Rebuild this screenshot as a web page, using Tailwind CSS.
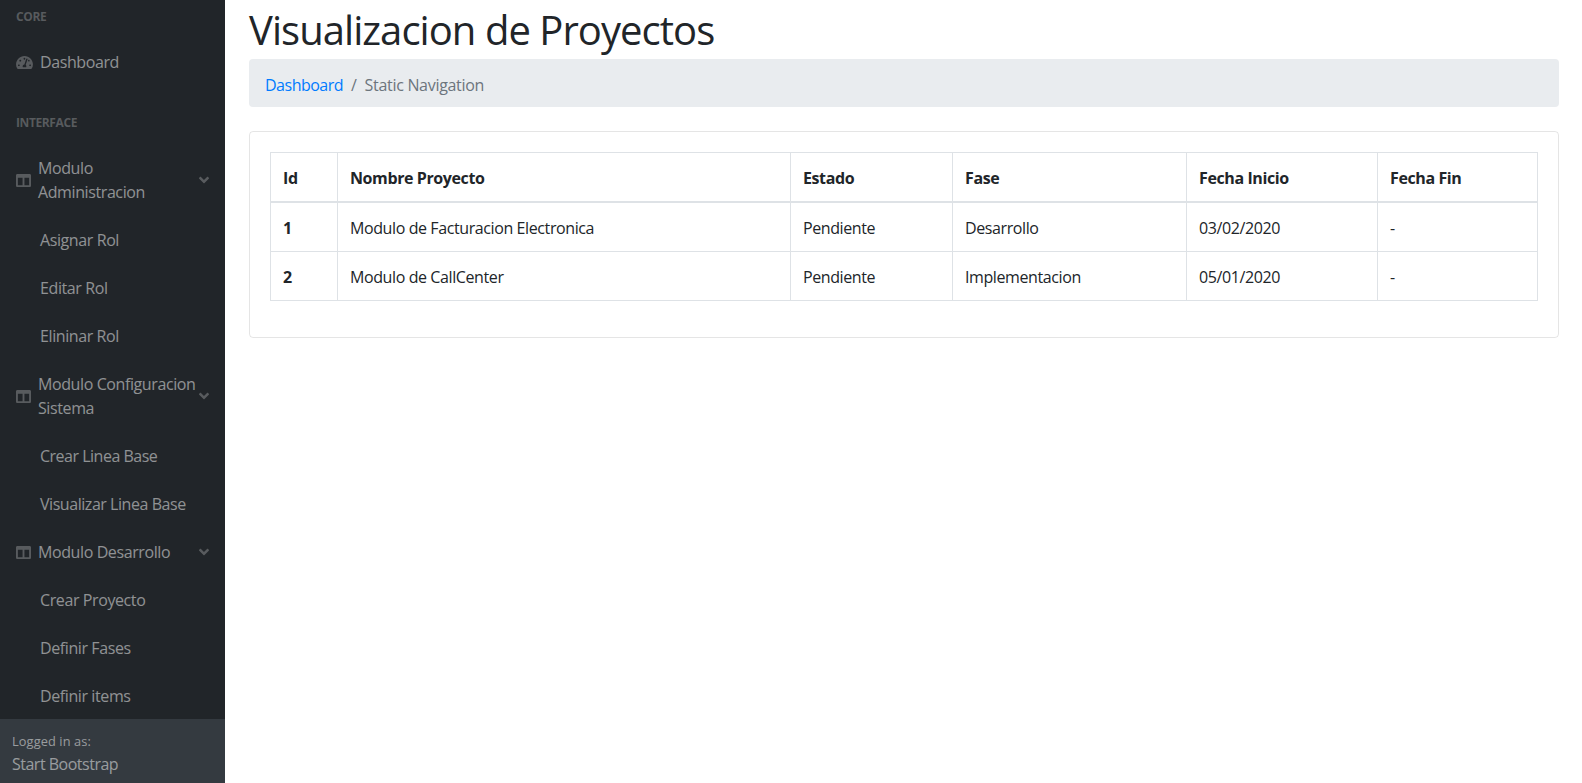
<!DOCTYPE html>
<html lang="es">
<head>
    <meta charset="UTF-8">
    <title>Visualizacion de Proyectos</title>
    <script src="https://cdn.jsdelivr.net/npm/@tailwindcss/browser@4"></script>
</head>
<body class="bg-white h-screen overflow-hidden flex font-['Open_Sans',sans-serif] text-[#212529] text-[16px] leading-[24px] tracking-[-0.4px]">
    <!-- sidebar -->
    <aside class="w-[225px] shrink-0 h-full flex flex-col bg-[#212529] text-white/50">
        <nav class="flex-1 min-h-0 overflow-hidden pt-[8px]">
            <div class="px-4 pb-3 text-[12px] leading-[18px] font-bold text-white/25">CORE</div>
            <a class="flex items-center h-12 px-4">
                <svg class="w-[17px] h-[15px] mr-[7px] fill-white/25" viewBox="0 0 576 512"><path d="M288 32C128.94 32 0 160.94 0 320c0 52.8 14.25 102.26 39.06 144.8 5.61 9.62 16.3 15.2 27.44 15.2h443c11.14 0 21.83-5.58 27.44-15.2C561.75 422.26 576 372.8 576 320c0-159.06-128.94-288-288-288zm0 64c14.71 0 26.58 10.13 30.32 23.65-1.11 2.26-2.64 4.23-3.45 6.67l-9.22 27.67c-5.13 3.49-10.97 6.01-17.64 6.01-17.67 0-32-14.33-32-32S270.33 96 288 96zM96 384c-17.67 0-32-14.33-32-32s14.33-32 32-32 32 14.33 32 32-14.33 32-32 32zm48-160c-17.67 0-32-14.33-32-32s14.33-32 32-32 32 14.33 32 32-14.33 32-32 32zm246.77-72.41l-61.33 184C343.13 347.33 352 364.54 352 384c0 11.72-3.38 22.55-8.88 32H232.88c-5.5-9.45-8.88-20.28-8.88-32 0-33.94 26.5-61.43 59.9-63.59l61.34-184.01c4.17-12.56 17.73-19.45 30.36-15.17 12.57 4.19 19.35 17.77 15.17 30.36zm14.66 57.2l15.52-46.55c3.47-1.29 7.13-2.23 11.05-2.23 17.67 0 32 14.33 32 32s-14.33 32-32 32c-11.38-.01-20.89-6.28-26.57-15.22zM480 384c-17.67 0-32-14.33-32-32s14.33-32 32-32 32 14.33 32 32-14.33 32-32 32z"/></svg>
                <span>Dashboard</span>
            </a>
            <div class="px-4 pt-7 pb-3 text-[12px] leading-[18px] font-bold text-white/25">INTERFACE</div>

            <a class="flex items-center py-3 pl-4 pr-[16px]">
                <svg class="w-[15px] h-[15px] mr-[7px] shrink-0 fill-white/25" viewBox="0 0 512 512"><path d="M464 32H48C21.49 32 0 53.49 0 80v352c0 26.51 21.49 48 48 48h416c26.51 0 48-21.49 48-48V80c0-26.51-21.49-48-48-48zM224 416H64V160h160v256zm224 0H288V160h160v256z"/></svg>
                <span class="flex-1">Modulo Administracion</span>
                <svg class="w-[10px] h-[16px] shrink-0 fill-white/25" viewBox="0 0 320 512"><path d="M143 352.3L7 216.3c-9.4-9.4-9.4-24.6 0-33.9l22.6-22.6c9.4-9.4 24.6-9.4 33.9 0l96.4 96.4 96.4-96.4c9.4-9.4 24.6-9.4 33.9 0l22.6 22.6c9.4 9.4 9.4 24.6 0 33.9l-136 136c-9.2 9.4-24.4 9.4-33.8 0z"/></svg>
            </a>
            <a class="flex items-center h-12 pl-10">Asignar Rol</a>
            <a class="flex items-center h-12 pl-10">Editar Rol</a>
            <a class="flex items-center h-12 pl-10">Elininar Rol</a>

            <a class="flex items-center py-3 pl-4 pr-[16px]">
                <svg class="w-[15px] h-[15px] mr-[7px] shrink-0 fill-white/25" viewBox="0 0 512 512"><path d="M464 32H48C21.49 32 0 53.49 0 80v352c0 26.51 21.49 48 48 48h416c26.51 0 48-21.49 48-48V80c0-26.51-21.49-48-48-48zM224 416H64V160h160v256zm224 0H288V160h160v256z"/></svg>
                <span class="flex-1 whitespace-pre-line tracking-[-0.4px]">Modulo Configuracion
Sistema</span>
                <svg class="w-[10px] h-[16px] shrink-0 fill-white/25" viewBox="0 0 320 512"><path d="M143 352.3L7 216.3c-9.4-9.4-9.4-24.6 0-33.9l22.6-22.6c9.4-9.4 24.6-9.4 33.9 0l96.4 96.4 96.4-96.4c9.4-9.4 24.6-9.4 33.9 0l22.6 22.6c9.4 9.4 9.4 24.6 0 33.9l-136 136c-9.2 9.4-24.4 9.4-33.8 0z"/></svg>
            </a>
            <a class="flex items-center h-12 pl-10 tracking-[-0.5px]">Crear Linea Base</a>
            <a class="flex items-center h-12 pl-10 tracking-[-0.45px]">Visualizar Linea Base</a>

            <a class="flex items-center h-12 pl-4 pr-[16px]">
                <svg class="w-[15px] h-[15px] mr-[7px] shrink-0 fill-white/25" viewBox="0 0 512 512"><path d="M464 32H48C21.49 32 0 53.49 0 80v352c0 26.51 21.49 48 48 48h416c26.51 0 48-21.49 48-48V80c0-26.51-21.49-48-48-48zM224 416H64V160h160v256zm224 0H288V160h160v256z"/></svg>
                <span class="flex-1">Modulo Desarrollo</span>
                <svg class="w-[10px] h-[16px] shrink-0 fill-white/25" viewBox="0 0 320 512"><path d="M143 352.3L7 216.3c-9.4-9.4-9.4-24.6 0-33.9l22.6-22.6c9.4-9.4 24.6-9.4 33.9 0l96.4 96.4 96.4-96.4c9.4-9.4 24.6-9.4 33.9 0l22.6 22.6c9.4 9.4 9.4 24.6 0 33.9l-136 136c-9.2 9.4-24.4 9.4-33.8 0z"/></svg>
            </a>
            <a class="flex items-center h-12 pl-10">Crear Proyecto</a>
            <a class="flex items-center h-12 pl-10">Definir Fases</a>
            <a class="flex items-center h-12 pl-10">Definir items</a>
        </nav>
        <div class="h-[64px] shrink-0 bg-[#343a40] px-3 pt-[13px]">
            <div class="text-[12.8px] leading-[19px] tracking-[0.1px]">Logged in as:</div>
            <div class="mt-[1px] tracking-[-0.5px]">Start Bootstrap</div>
        </div>
    </aside>

    <!-- main -->
    <main class="flex-1 min-w-0 pl-6 pr-[23px]">
        <h1 class="text-[40px] leading-[48px] tracking-[-0.95px] pt-[6px] mb-[5px]">Visualizacion de Proyectos</h1>
        <ol class="flex items-center h-12 px-4 pt-[3px] mb-6 bg-[#e9ecef] rounded">
            <li class="text-[#007bff] tracking-[-0.5px]">Dashboard</li>
            <li class="text-[#6c757d] px-2">/</li>
            <li class="text-[#6c757d] tracking-[-0.3px]">Static Navigation</li>
        </ol>
        <div class="border border-black/10 rounded p-5">
            <table class="w-full table-fixed border-collapse mb-4">
                <colgroup>
                    <col class="w-[67px]"><col class="w-[453px]"><col class="w-[162px]"><col class="w-[234px]"><col class="w-[191px]"><col>
                </colgroup>
                <thead>
                    <tr class="h-[49px]">
                        <th class="border border-[#dee2e6] border-b-2 px-3 pt-[2px] text-left font-bold">Id</th>
                        <th class="border border-[#dee2e6] border-b-2 px-3 pt-[2px] text-left font-bold">Nombre Proyecto</th>
                        <th class="border border-[#dee2e6] border-b-2 px-3 pt-[2px] text-left font-bold">Estado</th>
                        <th class="border border-[#dee2e6] border-b-2 px-3 pt-[2px] text-left font-bold">Fase</th>
                        <th class="border border-[#dee2e6] border-b-2 px-3 pt-[2px] text-left font-bold">Fecha Inicio</th>
                        <th class="border border-[#dee2e6] border-b-2 px-3 pt-[2px] text-left font-bold">Fecha Fin</th>
                    </tr>
                </thead>
                <tbody>
                    <tr class="h-[50px]">
                        <td class="border border-[#dee2e6] px-3 pt-[2px] font-bold">1</td>
                        <td class="border border-[#dee2e6] px-3 pt-[2px]">Modulo de Facturacion Electronica</td>
                        <td class="border border-[#dee2e6] px-3 pt-[2px]">Pendiente</td>
                        <td class="border border-[#dee2e6] px-3 pt-[2px]">Desarrollo</td>
                        <td class="border border-[#dee2e6] px-3 pt-[2px]">03/02/2020</td>
                        <td class="border border-[#dee2e6] px-3 pt-[2px]">-</td>
                    </tr>
                    <tr class="h-[49px]">
                        <td class="border border-[#dee2e6] px-3 pt-[2px] font-bold">2</td>
                        <td class="border border-[#dee2e6] px-3 pt-[2px]">Modulo de CallCenter</td>
                        <td class="border border-[#dee2e6] px-3 pt-[2px]">Pendiente</td>
                        <td class="border border-[#dee2e6] px-3 pt-[2px]">Implementacion</td>
                        <td class="border border-[#dee2e6] px-3 pt-[2px]">05/01/2020</td>
                        <td class="border border-[#dee2e6] px-3 pt-[2px]">-</td>
                    </tr>
                </tbody>
            </table>
        </div>
    </main>
</body>
</html>
